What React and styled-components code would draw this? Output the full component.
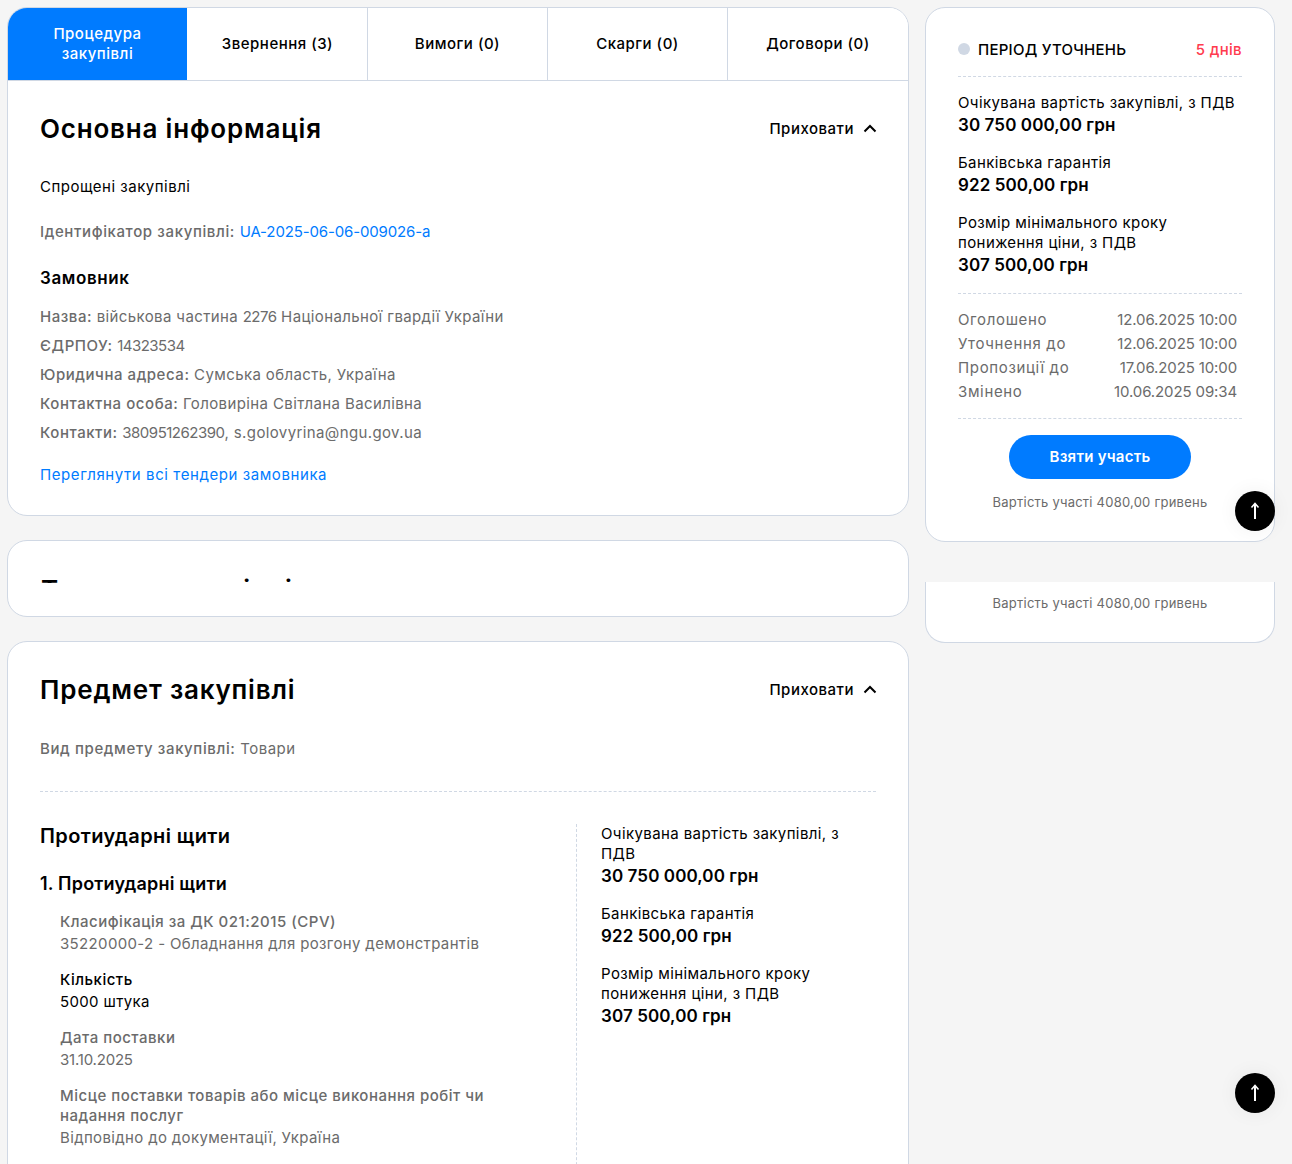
import styled, { createGlobalStyle } from "styled-components";

const GlobalStyle = createGlobalStyle`
  html, body {
    margin: 0;
    padding: 0;
    height: 100%;
    overflow: hidden;
    background: #f5f5f5;
  }
  * {
    box-sizing: border-box;
  }
  body {
    font-family: Inter, "Noto Sans", sans-serif;
    font-size: 15px;
    letter-spacing: 0.5px;
    color: #000;
  }
`;

const BLUE = "#007bff";
const GREY = "#6b6b6b";
const LINE = "#d0d8e4";

const tabs = ["Процедура закупівлі", "Звернення (3)", "Вимоги (0)", "Скарги (0)", "Договори (0)"];

const prices = [
  ["Очікувана вартість закупівлі, з ПДВ", "30 750 000,00 грн"],
  ["Банківська гарантія", "922 500,00 грн"],
  ["Розмір мінімального кроку пониження ціни, з ПДВ", "307 500,00 грн"],
];

const dates = [
  ["Оголошено", "12.06.2025 10:00"],
  ["Уточнення до", "12.06.2025 10:00"],
  ["Пропозиції до", "17.06.2025 10:00"],
  ["Змінено", "10.06.2025 09:34"],
];

function Hide() {
  return (
    <HideButton>
      Приховати
      <svg width="14" height="9" viewBox="0 0 14 9" fill="none">
        <path d="M1.5 7.5L7 2l5.5 5.5" stroke="#000" strokeWidth="2" />
      </svg>
    </HideButton>
  );
}

function Prices() {
  return prices.map(([label, value]) => (
    <Stat key={label}>
      <StatLabel>{label}</StatLabel>
      <StatValue>{value}</StatValue>
    </Stat>
  ));
}

function ToTop({ $top }) {
  return (
    <TopButton $top={$top}>
      <svg width="10" height="18" viewBox="0 0 10 18" fill="none">
        <path d="M5 2v15" stroke="#fff" strokeWidth="2" />
        <path d="M1.5 5.5L5 1.5l3.5 4" stroke="#fff" strokeWidth="1.5" />
      </svg>
    </TopButton>
  );
}

export default function App() {
  return (
    <>
      <GlobalStyle />
      <Page>
        <Main>
          <Card>
            <Tabs>
              {tabs.map((tab, i) => (
                <Tab key={tab} $active={i === 0}>
                  {tab}
                </Tab>
              ))}
            </Tabs>
            <Section>
              <TitleRow>
                <Title>Основна інформація</Title>
                <Hide />
              </TitleRow>
              <PlainText>Спрощені закупівлі</PlainText>
              <IdLine>
                <b>Ідентифікатор закупівлі:</b> <BlueText>UA-2025-06-06-009026-a</BlueText>
              </IdLine>
              <SubTitle>Замовник</SubTitle>
              <InfoList>
                <InfoRow>
                  <b>Назва:</b> військова частина <Num>2276</Num> Національної гвардії України
                </InfoRow>
                <InfoRow>
                  <b>ЄДРПОУ:</b> <Num>14323534</Num>
                </InfoRow>
                <InfoRow>
                  <b>Юридична адреса:</b> Сумська область, Україна
                </InfoRow>
                <InfoRow>
                  <b>Контактна особа:</b> Головиріна Світлана Василівна
                </InfoRow>
                <InfoRow>
                  <b>Контакти:</b> <Num>380951262390</Num>, s.golovyrina@ngu.gov.ua
                </InfoRow>
              </InfoList>
              <AllTenders>Переглянути всі тендери замовника</AllTenders>
            </Section>
          </Card>

          <CollapsedCard>
            <ClippedTitle>
              <Title>Тендерна сторінці</Title>
            </ClippedTitle>
          </CollapsedCard>

          <Card>
            <Section $tall>
              <TitleRow>
                <Title>Предмет закупівлі</Title>
                <Hide />
              </TitleRow>
              <KindLine>
                <b>Вид предмету закупівлі:</b> Товари
              </KindLine>
              <Dashed $top={31} $bottom={32} />
              <Columns>
                <div>
                  <LotTitle>Протиударні щити</LotTitle>
                  <ItemTitle>1. Протиударні щити</ItemTitle>
                  <Details>
                    <Detail>
                      <b>Класифікація за ДК 021:2015 (CPV)</b>
                      <span>35220000-2 - Обладнання для розгону демонстрантів</span>
                    </Detail>
                    <Detail $dark>
                      <b>Кількість</b>
                      <span>5000 штука</span>
                    </Detail>
                    <Detail>
                      <b>Дата поставки</b>
                      <span>
                        <Num>31.10.2025</Num>
                      </span>
                    </Detail>
                    <Detail>
                      <b>Місце поставки товарів або місце виконання робіт чи надання послуг</b>
                      <span>Відповідно до документації, Україна</span>
                    </Detail>
                  </Details>
                </div>
                <SideColumn>
                  <Prices />
                </SideColumn>
              </Columns>
            </Section>
          </Card>
        </Main>

        <Aside>
          <SideCard>
            <StatusRow>
              <Status>
                <Dot />
                ПЕРІОД УТОЧНЕНЬ
              </Status>
              <Days>5 днів</Days>
            </StatusRow>
            <Dashed $bottom={16} />
            <Prices />
            <Dashed $bottom={14} />
            <Dates>
              {dates.map(([label, value]) => (
                <DateRow key={label}>
                  <DateLabel>{label}</DateLabel>
                  <DateValue>{value}</DateValue>
                </DateRow>
              ))}
            </Dates>
            <Dashed $top={14} $bottom={16} />
            <Join>Взяти участь</Join>
            <Note>Вартість участі 4080,00 гривень</Note>
          </SideCard>
          <SideTail>
            <Note>Вартість участі 4080,00 гривень</Note>
          </SideTail>
        </Aside>
      </Page>
      <ToTop $top={491} />
      <ToTop $top={1073} />
    </>
  );
}

const Page = styled.div`
  display: grid;
  grid-template-columns: 902px 350px;
  column-gap: 16px;
  align-items: start;
  padding: 7px 0 0 7px;
  height: 1164px;
  overflow: hidden;
`;

const Main = styled.main`
  display: flex;
  flex-direction: column;
  gap: 24px;
`;

const Card = styled.section`
  background: #fff;
  border: 1px solid ${LINE};
  border-radius: 20px;
  overflow: hidden;
`;

const CollapsedCard = styled(Card)`
  padding: 33px 32px 33px 33px;
`;

const ClippedTitle = styled.div`
  height: 9px;
  overflow: hidden;
`;

const Tabs = styled.div`
  display: grid;
  grid-template-columns: repeat(5, 1fr);
  height: 73px;
  border-bottom: 1px solid ${LINE};
`;

const Tab = styled.div`
  display: flex;
  align-items: center;
  justify-content: center;
  padding: 0 32px;
  text-align: center;
  font-size: 15px;
  line-height: 20px;
  font-weight: 500;
  color: ${(p) => (p.$active ? "#fff" : "#000")};
  background: ${(p) => (p.$active ? BLUE : "#fff")};
  border-right: 1px solid ${(p) => (p.$active ? "#fff" : LINE)};
  background-clip: padding-box;
  &:last-child {
    border-right: 0;
  }
`;

const Section = styled.div`
  padding: 32px 32px 29px;
  min-height: ${(p) => (p.$tall ? "900px" : "auto")};
`;

const TitleRow = styled.div`
  display: flex;
  align-items: center;
  justify-content: space-between;
  height: 32px;
`;

const Title = styled.h2`
  margin: 0;
  font-size: 26px;
  line-height: 32px;
  font-weight: 600;
  letter-spacing: 0.8px;
  white-space: nowrap;
`;

const HideButton = styled.div`
  display: flex;
  align-items: center;
  gap: 9px;
  margin: -2px -1px 0 0;
  font-size: 15px;
  font-weight: 500;
`;

const PlainText = styled.div`
  margin-top: 31px;
  line-height: 22px;
`;

const BlueText = styled.span`
  color: ${BLUE};
  letter-spacing: -0.14px;
`;

const Num = styled.span`
  letter-spacing: -0.5px;
`;

const IdLine = styled.div`
  margin-top: 23px;
  line-height: 22px;
  color: ${GREY};
  b {
    font-weight: 550;
    letter-spacing: 0.62px;
  }
`;

const SubTitle = styled.h3`
  margin: 23px 0 0;
  font-size: 17px;
  line-height: 24px;
  font-weight: 600;
  letter-spacing: 0.6px;
`;

const InfoList = styled.div`
  margin-top: 12px;
`;

const InfoRow = styled.div`
  line-height: 29px;
  color: ${GREY};
  letter-spacing: 0.38px;
  b {
    font-weight: 550;
    letter-spacing: 0.55px;
  }
`;

const AllTenders = styled.div`
  margin-top: 17px;
  line-height: 22px;
  letter-spacing: 0.58px;
  color: ${BLUE};
`;

const KindLine = styled(IdLine)`
  margin-top: 32px;
`;

const Dashed = styled.div`
  height: 1px;
  margin: ${(p) => p.$top || 0}px 0 ${(p) => p.$bottom || 0}px;
  border-top: 1px dashed ${LINE};
`;

const Columns = styled.div`
  display: grid;
  grid-template-columns: 536px 1fr;
`;

const LotTitle = styled.h3`
  margin: 0;
  font-size: 20px;
  line-height: 24px;
  font-weight: 600;
  letter-spacing: 0.4px;
`;

const ItemTitle = styled.h4`
  margin: 24px 0 0;
  font-size: 18px;
  line-height: 24px;
  font-weight: 600;
  letter-spacing: 0.2px;
`;

const Details = styled.div`
  display: flex;
  flex-direction: column;
  gap: 14px;
  margin-top: 16px;
  padding: 0 80px 40px 20px;
`;

const Detail = styled.div`
  color: ${(p) => (p.$dark ? "#000" : GREY)};
  b {
    display: block;
    font-weight: 550;
    line-height: 20px;
    letter-spacing: 0.5px;
  }
  span {
    display: block;
    line-height: 24px;
    letter-spacing: 0.35px;
  }
  span span {
    display: inline;
    letter-spacing: -0.2px;
  }
`;

const SideColumn = styled.div`
  border-left: 1px dashed ${LINE};
  padding: 0 36px 0 24px;
`;

const Stat = styled.div`
  margin-bottom: 16px;
`;

const StatLabel = styled.div`
  line-height: 20px;
  letter-spacing: 0.4px;
`;

const StatValue = styled.div`
  font-size: 17px;
  line-height: 24px;
  font-weight: 600;
  letter-spacing: 0.1px;
`;

const Aside = styled.aside`
  display: flex;
  flex-direction: column;
  gap: 40px;
`;

const SideCard = styled.section`
  background: #fff;
  border: 1px solid ${LINE};
  border-radius: 20px;
  padding: 29px 32px 29px;
`;

const SideTail = styled.section`
  background: #fff;
  border: 1px solid ${LINE};
  border-top: 0;
  border-radius: 0 0 20px 20px;
  padding: 11px 32px 29px;
`;

const StatusRow = styled.div`
  display: flex;
  align-items: center;
  justify-content: space-between;
  height: 24px;
  margin-bottom: 15px;
`;

const Status = styled.div`
  display: flex;
  align-items: center;
  gap: 8px;
  font-weight: 550;
  letter-spacing: 0.25px;
`;

const Dot = styled.i`
  width: 12px;
  height: 12px;
  border-radius: 50%;
  background: ${LINE};
`;

const Days = styled.span`
  color: #ff3b4e;
  font-weight: 500;
  letter-spacing: 0.33px;
`;

const Dates = styled.div`
  padding-right: 5px;
`;

const DateRow = styled.div`
  display: flex;
  justify-content: space-between;
  line-height: 24px;
  color: ${GREY};
`;

const DateLabel = styled.span`
  letter-spacing: 0.65px;
`;

const DateValue = styled.span`
  letter-spacing: -0.12px;
`;

const Join = styled.div`
  width: 182px;
  height: 44px;
  margin: 0 auto;
  border-radius: 22px;
  background: ${BLUE};
  color: #fff;
  font-weight: 600;
  letter-spacing: 0.25px;
  line-height: 44px;
  text-align: center;
`;

const Note = styled.div`
  margin-top: 13px;
  font-size: 13px;
  line-height: 20px;
  letter-spacing: 0.23px;
  text-align: center;
  color: ${GREY};
  ${SideTail} & {
    margin-top: 0;
  }
`;

const TopButton = styled.div`
  position: fixed;
  left: 1235px;
  top: ${(p) => p.$top}px;
  width: 40px;
  height: 40px;
  display: flex;
  align-items: center;
  justify-content: center;
  border-radius: 50%;
  background: #000;
  box-shadow: 0 0 20px rgba(0, 0, 0, 0.06);
`;
